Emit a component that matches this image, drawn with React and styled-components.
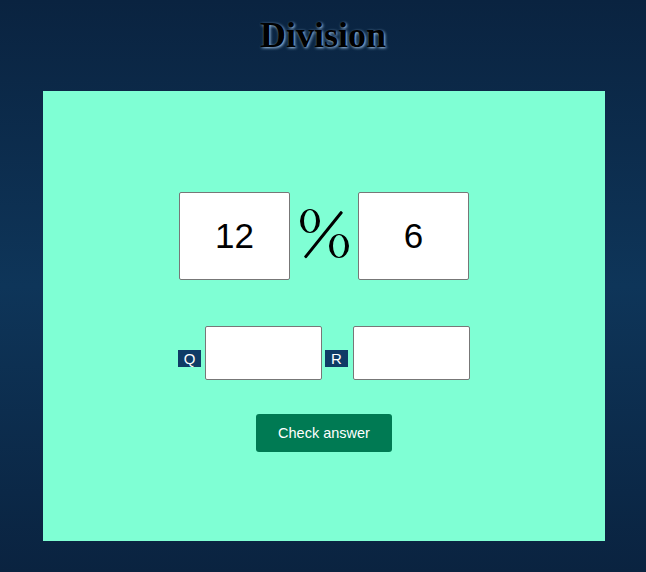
import React from "react";
import styled, { createGlobalStyle } from "styled-components";

const Global = createGlobalStyle`
  html, body { margin: 0; padding: 0; }
  body {
    min-height: 572px;
    background: linear-gradient(180deg, #0a2340 0%, #0e3559 50%, #0a2340 100%);
    font-family: "Liberation Sans", Arial, sans-serif;
  }
`;

const Page = styled.div`
  display: flex;
  flex-direction: column;
  align-items: flex-start;
  padding-top: 15px;
`;

const Title = styled.h1`
  align-self: stretch;
  margin: 0;
  text-align: center;
  font-family: "Liberation Serif", "Times New Roman", serif;
  font-weight: bold;
  font-size: 36px;
  line-height: 41px;
  color: #000;
  text-shadow: 1px 1px 3px #a8cdf0;
`;

const Card = styled.main`
  margin: 35px 0 0 43px;
  width: 562px;
  height: 450px;
  background: #7fffd4;
  display: flex;
  flex-direction: column;
  align-items: center;
  padding-top: 101px;
  box-sizing: border-box;
`;

const Row = styled.div`
  display: flex;
  align-items: ${(p) => (p.$bottom ? "flex-end" : "center")};
  gap: ${(p) => p.$gap || 0}px;
  margin-bottom: ${(p) => p.$mb || 0}px;
`;

const Box = styled.input`
  box-sizing: border-box;
  width: ${(p) => p.$w}px;
  height: ${(p) => p.$h}px;
  border: 1px solid #777;
  border-radius: 2px;
  background: #fff;
  text-align: center;
  font-family: "Liberation Sans", Arial, sans-serif;
  font-size: 35px;
  color: #000;
  padding: 0;
  outline: none;
`;

/* Times-style percent sign drawn as a small glyph: raised oval, long slant, lowered oval */
const Percent = styled.span`
  position: relative;
  display: block;
  width: 68px;
  height: 88px;
`;

const Oval = styled.span`
  position: absolute;
  left: ${(p) => p.$x}px;
  top: ${(p) => p.$y}px;
  box-sizing: border-box;
  width: 20px;
  height: 24px;
  border-style: solid;
  border-color: #000;
  border-width: 1.5px 4px;
  border-radius: 50%;
`;

const Slash = styled.span`
  position: absolute;
  left: 32px;
  top: 13px;
  width: 2.5px;
  height: 59px;
  background: #000;
  border-radius: 1px;
  transform: rotate(38.8deg);
`;

const Tag = styled.span`
  display: inline-flex;
  align-items: center;
  justify-content: center;
  width: 23px;
  height: 17px;
  margin-bottom: 13px;
  background: #0f3b66;
  color: #fff;
  font-size: 15px;
  line-height: 17px;
`;

const Group = styled.div`
  display: flex;
  align-items: flex-end;
  gap: ${(p) => p.$gap}px;
`;

const Button = styled.button`
  width: 136px;
  height: 38px;
  border: none;
  border-radius: 3px;
  background: #007a53;
  color: #fff;
  font-family: "Liberation Sans", Arial, sans-serif;
  font-size: 14.5px;
  cursor: pointer;
`;

export default function App() {
  return (
    <>
      <Global />
      <Page>
        <Title>Division</Title>
        <Card>
          <Row $mb={46}>
            <Box $w={111} $h={88} defaultValue="12" readOnly />
            <Percent role="img" aria-label="%" title="%">
              <Oval $x={10} $y={17} />
              <Slash />
              <Oval $x={39} $y={42} />
            </Percent>
            <Box $w={111} $h={88} defaultValue="6" readOnly />
          </Row>
          <Row $bottom $gap={3} $mb={34}>
            <Group $gap={4}>
              <Tag>Q</Tag>
              <Box $w={117} $h={54} />
            </Group>
            <Group $gap={5}>
              <Tag>R</Tag>
              <Box $w={117} $h={54} />
            </Group>
          </Row>
          <Button>Check answer</Button>
        </Card>
      </Page>
    </>
  );
}
